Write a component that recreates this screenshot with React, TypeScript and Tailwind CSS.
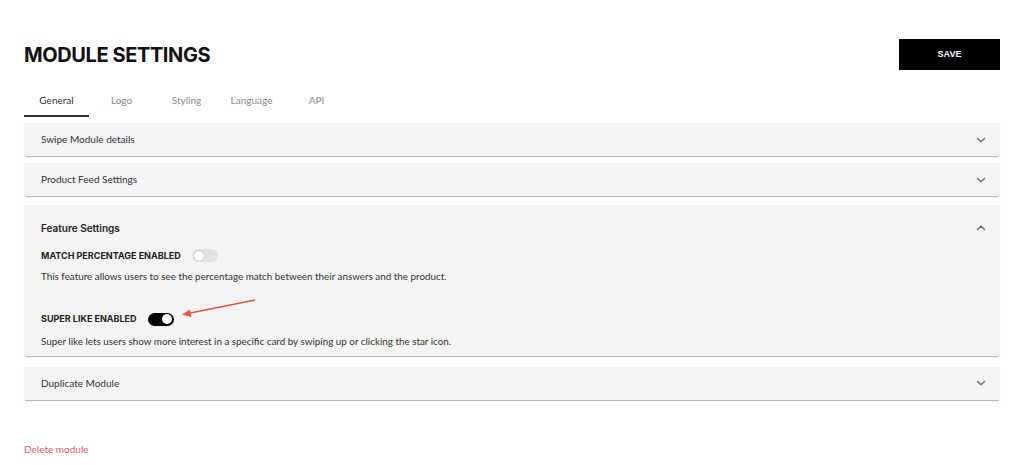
import React from 'react';

function Chevron({ up }: { up?: boolean }) {
  return (
    <svg width="10" height="10" viewBox="0 0 10 10" className="text-[#6b6b6b]">
      <path
        d={up ? 'M1.5 6.5 L5 3.3 L8.5 6.5' : 'M1.5 3.5 L5 6.7 L8.5 3.5'}
        fill="none"
        stroke="currentColor"
        strokeWidth="1.4"
        strokeLinecap="round"
        strokeLinejoin="round"
      />
    </svg>
  );
}

function Toggle({ on }: { on: boolean }) {
  return (
    <div
      className={`flex h-[13px] w-[26px] items-center rounded-full px-[2px] ${
        on ? 'justify-end bg-black' : 'justify-start bg-[#e2e2e2]'
      }`}
    >
      <div className="h-[10px] w-[10px] rounded-full bg-white shadow-[0_0_1px_rgba(0,0,0,0.4)]" />
    </div>
  );
}

function Panel({ title }: { title: string }) {
  return (
    <div className="flex h-[33px] items-center justify-between rounded-[2px] bg-[#f4f4f4] pl-[17px] pr-[14px] shadow-[0_2px_1px_-1px_rgba(0,0,0,0.2),0_1px_1px_0_rgba(0,0,0,0.12)]">
      <span className="text-[10px] text-[#333]">{title}</span>
      <Chevron />
    </div>
  );
}

export default function App() {
  const tabs = ['General', 'Logo', 'Styling', 'Language', 'API'];

  return (
    <div className="relative h-[465px] w-[1024px] bg-white px-6 pt-[39px] font-['Lato',sans-serif]">
      <div className="flex items-start justify-between">
        <h1 className="mt-[1px] font-['Inter',sans-serif] text-[20px] leading-[30px] font-bold tracking-[-0.4px] text-[#111]">
          MODULE SETTINGS
        </h1>
        <button className="h-[31px] w-[101px] bg-black font-['Liberation_Sans',sans-serif] text-[9px] font-bold text-white">
          SAVE
        </button>
      </div>

      <div className="mt-[23px] flex text-[10px] leading-[15px]">
        {tabs.map((t, i) => (
          <div
            key={t}
            className={`flex h-[24px] w-[65px] items-start justify-center ${
              i === 0 ? 'border-b-2 border-[#333] text-[#333]' : 'text-[#8a8a8a]'
            }`}
          >
            {t}
          </div>
        ))}
      </div>

      <div className="mt-[6px] flex flex-col">
        <Panel title="Swipe Module details" />
        <div className="h-[7px]" />
        <Panel title="Product Feed Settings" />
        <div className="h-[9px]" />

        <div className="rounded-[2px] bg-[#f4f4f4] pl-[17px] pr-[14px] pb-[7px] shadow-[0_2px_1px_-1px_rgba(0,0,0,0.2),0_1px_1px_0_rgba(0,0,0,0.12)]">
          <div className="flex h-[44px] items-center justify-between pt-[2px]">
            <span className="font-['Inter',sans-serif] text-[10px] font-semibold text-[#222]">Feature Settings</span>
            <Chevron up />
          </div>
          <div className="flex items-center gap-[11px]">
            <span className="font-['Inter',sans-serif] text-[9px] font-bold text-[#222]">MATCH PERCENTAGE ENABLED</span>
            <Toggle on={false} />
          </div>
          <p className="mt-[6px] text-[9.85px] text-[#333]">
            This feature allows users to see the percentage match between their answers and the product.
          </p>
          <div className="mt-[29px] flex items-center gap-[11px]">
            <span className="font-['Inter',sans-serif] text-[9px] font-bold text-[#222]">SUPER LIKE ENABLED</span>
            <Toggle on={true} />
          </div>
          <p className="mt-[8px] text-[9.85px] text-[#333]">
            Super like lets users show more interest in a specific card by swiping up or clicking the star icon.
          </p>
        </div>

        <div className="h-[11px]" />
        <Panel title="Duplicate Module" />
      </div>

      <div className="mt-[42px] text-[10px] text-[#e8606a]">Delete module</div>

      <svg className="absolute left-[176px] top-[296px]" width="82" height="24" viewBox="0 0 82 24">
        <line x1="79" y1="4" x2="12" y2="17.5" stroke="#e8553d" strokeWidth="1.5" />
        <path d="M6 18.5 L14 13.5 L15.5 21 Z" fill="#e8553d" />
      </svg>
    </div>
  );
}
